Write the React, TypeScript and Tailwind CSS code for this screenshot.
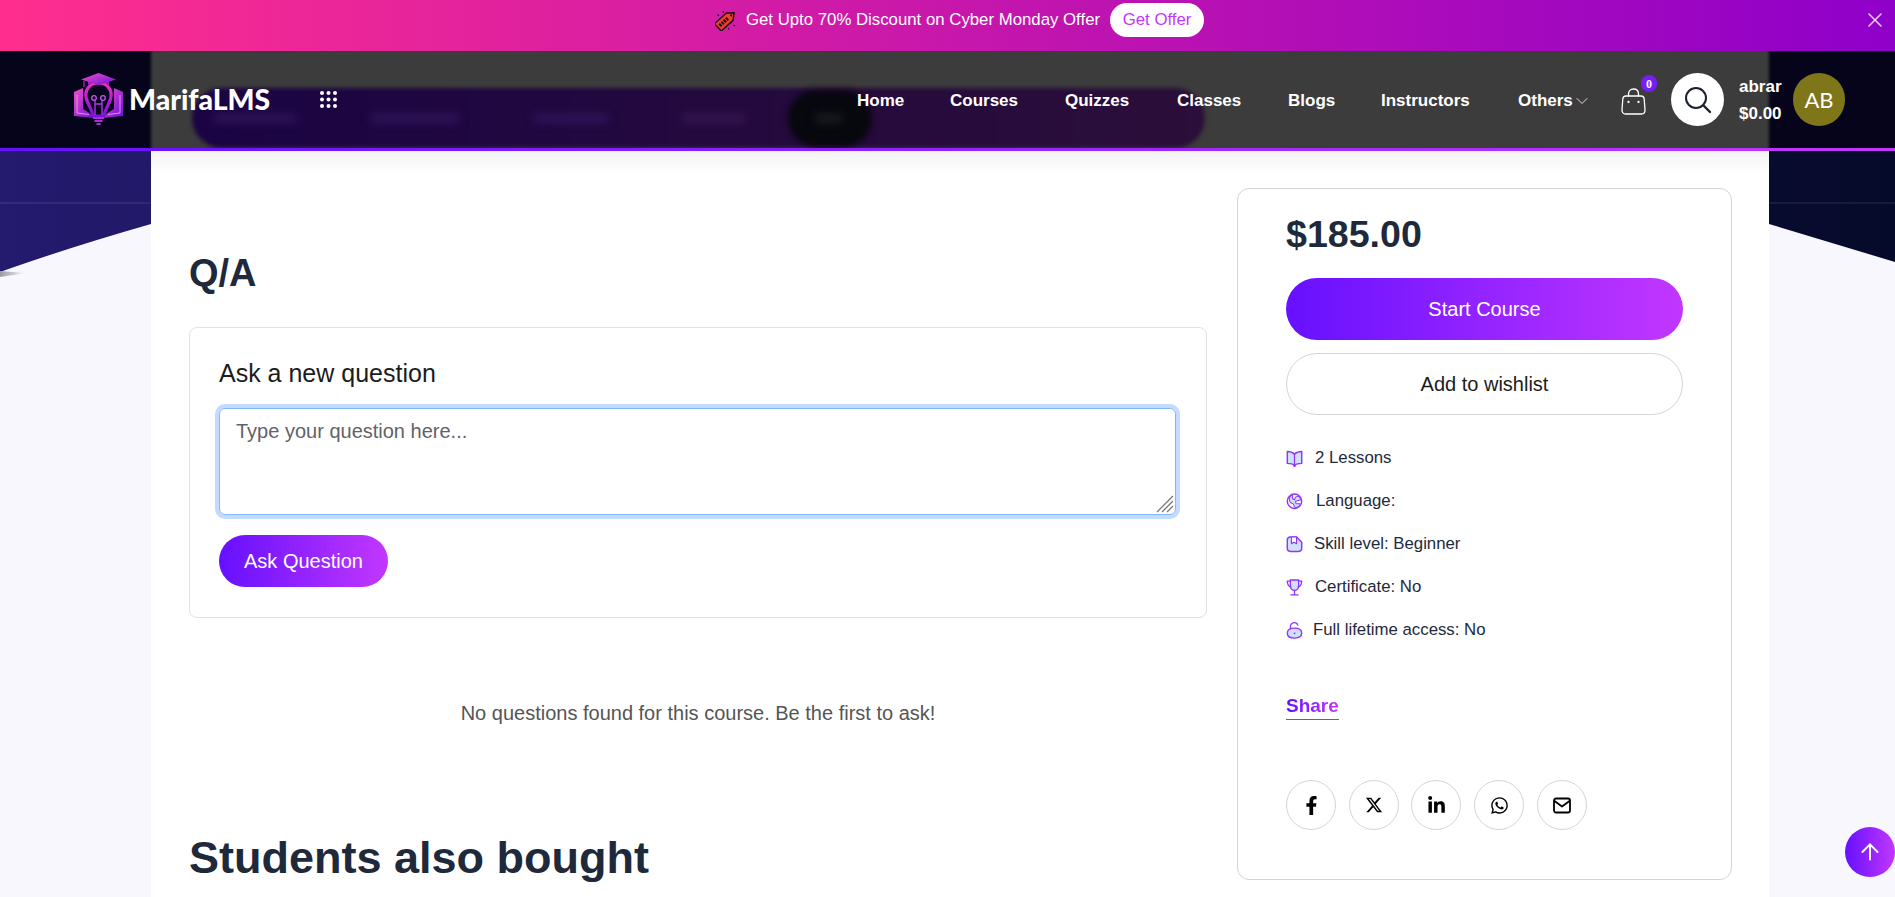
import React from "react";
import { X, ChevronDown, ArrowUp } from "lucide-react";
import { FaFacebookF, FaLinkedinIn, FaWhatsapp } from "react-icons/fa";
import { FaXTwitter } from "react-icons/fa6";

const grad = "bg-[linear-gradient(90deg,#6610ff_0%,#c237ff_100%)]";

function Logo() {
  return (
    <svg width="51" height="53" viewBox="0 0 51 53" className="shrink-0">
      <defs>
        <linearGradient id="lg" x1="0" y1="0" x2="0" y2="1">
          <stop offset="0" stopColor="#f030c0" />
          <stop offset="1" stopColor="#7a10e0" />
        </linearGradient>
        <linearGradient id="lb" x1="0" y1="0" x2="1" y2="1">
          <stop offset="0" stopColor="#f050c8" />
          <stop offset="1" stopColor="#6a10d8" />
        </linearGradient>
      </defs>
      <path d="M1 19 L10 15 L10 36 C14 38 18 41 22 45 L1 43Z" fill="url(#lb)" />
      <path d="M50 19 L41 15 L41 36 C37 38 33 41 29 45 L50 43Z" fill="url(#lb)" />
      <path d="M4 22 V40 L16 41.5 M47 22 V40 L35 41.5" fill="none" stroke="#f3a8ee" strokeWidth=".8" />
      <path d="M25.5 10 C16 10 11 18 13.5 26 C15 32 19 36 20 43 L31 43 C32 36 36 32 37.5 26 C40 18 35 10 25.5 10Z" fill="#0a0420" stroke="url(#lg)" strokeWidth="3.2" />
      <path d="M22 42 V27 M29 42 V27 M22 31 H29" stroke="#a63be0" strokeWidth="1.4" fill="none" />
      <circle cx="21" cy="25" r="2.3" fill="none" stroke="#c05ae8" strokeWidth="1.3" />
      <circle cx="30" cy="25" r="2.3" fill="none" stroke="#c05ae8" strokeWidth="1.3" />
      <path d="M20 45 H31 M21.5 48 H29.5 M23.5 51 H27.5" stroke="#b32ad8" strokeWidth="2.2" />
      <path d="M15 8 H36 V12 C30 8.5 21 8.5 15 12Z" fill="#a41bc8" />
      <path d="M25.5 0 L43 6.5 L25.5 12 L8 6.5Z" fill="url(#lb)" />
      <path d="M11 8 V14" stroke="#d03ac0" strokeWidth="1" />
    </svg>
  );
}

function Tag() {
  return (
    <svg width="22" height="22" viewBox="0 0 22 22" className="shrink-0">
      <g transform="rotate(-42 11 11)">
        <path d="M0 6 H16 L22 11 L16 16 H0Z" fill="#ee4030" stroke="#1f0a1a" strokeWidth="1.5" strokeLinejoin="round" />
        <circle cx="18" cy="11" r="1.1" fill="#1f0a1a" />
        <path d="M2.5 11 H14" stroke="#1f0a1a" strokeWidth="3.6" strokeDasharray="2 1" />
      </g>
      <path d="M2.5 5.5 L4 7 M8 2 L8.5 3.5 M20 17 L18.5 16 M14 20.5 L13.5 19" stroke="#1f0a1a" strokeWidth="1.1" />
    </svg>
  );
}

function GridDots() {
  const dots = [];
  for (let y = 0; y < 3; y++) for (let x = 0; x < 3; x++) dots.push(<circle key={`${x}${y}`} cx={2 + x * 6.5} cy={2 + y * 6.5} r="2" fill="#fff" />);
  return <svg width="17" height="17" viewBox="0 0 17 17" className="shrink-0">{dots}</svg>;
}

function Bag() {
  return (
    <svg width="25" height="27" viewBox="0 0 25 27" fill="none" stroke="#fff" strokeWidth="1.3" strokeLinecap="round">
      <path d="M5 8 H20 C22 8 23 9 23.2 11 L24 22 C24 24.5 22.5 26 20.5 26 H4.5 C2.5 26 1 24.5 1 22 L1.8 11 C2 9 3 8 5 8Z" />
      <path d="M7.5 8 V6 C7.5 3 9.5 1 12.5 1 C15.5 1 17.5 3 17.5 6 V8" />
      <circle cx="7.5" cy="14" r=".5" fill="#fff" />
      <circle cx="17.5" cy="14" r=".5" fill="#fff" />
    </svg>
  );
}

function Search() {
  return (
    <svg width="28" height="28" viewBox="0 0 28 28" fill="none" stroke="#1b2030" strokeWidth="2" strokeLinecap="round">
      <circle cx="12" cy="12" r="10" />
      <path d="M20 20 L26 26" strokeWidth="2.4" />
    </svg>
  );
}

const stroke = "#9333ff";
const fill = "#cfe0fb";

const icons: Record<string, React.ReactNode> = {
  book: (
    <>
      <path d="M1 1.5 C4 1.5 6.5 2.5 8 4 C9.5 2.5 12 1.5 15 1.5 V13 C12 13 9.5 13.5 8 15 C6.5 13.5 4 13 1 13Z" fill={fill} stroke={stroke} strokeWidth="1.4" strokeLinejoin="round" />
      <path d="M8 4 V15 M6.8 15 L8 16 L9.2 15" fill="none" stroke={stroke} strokeWidth="1.2" />
    </>
  ),
  globe: (
    <>
      <circle cx="8" cy="8" r="7" fill="#fff" stroke={stroke} strokeWidth="1.4" />
      <path d="M6 1.5 C3 3 2.5 6 3.5 8.5 C4.5 10.5 6 9.5 7 11 C7.5 12.5 7.5 13.5 9 14.5 L13 12.5 L13.5 10.5 L9.5 10.5 L9 8 L14.5 6.5 L12 3 L9 4 L8 6.5 L6 5.5Z" fill={fill} stroke={stroke} strokeWidth="1" strokeLinejoin="round" />
    </>
  ),
  file: (
    <>
      <path d="M4 1 H10 L15 6 V12 C15 14 14 15 12 15 H4 C2 15 1 14 1 12 V4 C1 2 2 1 4 1Z" fill={fill} stroke={stroke} strokeWidth="1.4" />
      <path d="M5 1 V7.5 L7.5 6 L10 7.5 V1Z" fill="#fff" stroke={stroke} strokeWidth="1.1" strokeLinejoin="round" />
    </>
  ),
  trophy: (
    <>
      <path d="M4 1 H12 V7 C12 9.5 10 11 8 11 C6 11 4 9.5 4 7Z" fill={fill} stroke={stroke} strokeWidth="1.3" />
      <path d="M4 2 H1 C1 5 2 7 4.5 8 M12 2 H15 C15 5 14 7 11.5 8 M8 11 V15 M4.5 15.4 H11.5" fill="none" stroke={stroke} strokeWidth="1.3" strokeLinecap="round" />
    </>
  ),
  lock: (
    <>
      <path d="M8 6 C12 6 15 7.5 15 11 C15 14.5 12.5 15.6 8 15.6 C3.5 15.6 1 14.5 1 11 C1 7.5 4 6 8 6Z" fill={fill} stroke={stroke} strokeWidth="1.3" />
      <path d="M4 6.8 V4.2 C4 2 6 .7 7.8 .7 C9.5 .7 10.8 1.7 11.2 3" fill="none" stroke={stroke} strokeWidth="1.2" strokeLinecap="round" />
      <circle cx="8" cy="11" r=".9" fill={stroke} />
    </>
  ),
};

function Feature({ icon, text, gap }: { icon: string; text: string; gap: string }) {
  return (
    <div className={`flex h-[18px] items-center ${gap} text-[16.8px] text-[#1e293b]`}>
      <svg width="17" height="17" viewBox="0 0 16 16.5" className="shrink-0">{icons[icon]}</svg>
      <span>{text}</span>
    </div>
  );
}

function Mail() {
  return (
    <svg width="18" height="17" viewBox="0 0 18 17" fill="none" stroke="#000" strokeWidth="1.8" strokeLinejoin="round">
      <rect x="1" y="1.5" width="16" height="14" rx="2" />
      <path d="M1.5 4 L9 9.5 L16.5 4" />
    </svg>
  );
}

function NavLink({ label, w }: { label: string; w: string }) {
  return <a className={`${w} text-[17px] font-bold leading-none text-white`}>{label}</a>;
}

function SocialBtn({ children }: { children: React.ReactNode }) {
  return (
    <span className="flex h-[50px] w-[50px] items-center justify-center rounded-full border border-[#d4d4d4] text-black">{children}</span>
  );
}

function Blur({ className }: { className: string }) {
  return <div className={`absolute top-[63px] h-[9px] rounded blur-[4px] ${className}`} />;
}

export default function App() {
  return (
    <div className="relative h-[897px] w-[1895px] overflow-hidden bg-[#f7f7fd] font-['Liberation_Sans',Arial,sans-serif]">
      {/* hero backdrop */}
      <svg className="absolute left-0 top-0" width="1895" height="300" viewBox="0 0 1895 300">
        <defs>
          <linearGradient id="hero" x1="0" y1="0" x2="1" y2="0">
            <stop offset="0" stopColor="#241a6e" />
            <stop offset="1" stopColor="#060a2a" />
          </linearGradient>
          <linearGradient id="wedge" x1="0" y1="0" x2="1" y2="0">
            <stop offset="0" stopColor="#9a9aa4" />
            <stop offset="1" stopColor="#f7f7fd" />
          </linearGradient>
        </defs>
        <path d="M0 0 H1895 V262 L1769 224 L151 224 C95 240 45 256 0 272Z" fill="url(#hero)" />
        <path d="M0 271 L26 273 L0 277Z" fill="url(#wedge)" />
        <path d="M0 203 H1895" stroke="#ffffff" strokeOpacity=".07" strokeWidth="2" />
      </svg>

      <div className="relative z-10 flex h-[51px] items-start justify-center bg-[linear-gradient(90deg,#ff2e8e_0%,#8f00c9_100%)] pt-[3px]">
        <div className="ml-[24px] flex h-[34px] items-center">
          <Tag />
          <span className="ml-[9px] text-[16.8px] text-white">Get Upto 70% Discount on Cyber Monday Offer</span>
          <span className="ml-[10px] flex h-[34px] w-[94px] items-center justify-center rounded-full bg-white text-[16.8px] text-[#c237ff]">Get Offer</span>
        </div>
        <X className="absolute right-[8px] top-[8px] text-[#f0d0f5]" size={24} strokeWidth={1.5} />
      </div>

      <header className="relative z-20">
        <div className="relative h-[97px] overflow-hidden bg-[#05041a]">
          <div className="absolute left-[151px] top-[-5px] h-[110px] w-[1618px] bg-[#3c3c3c] blur-[1.5px]" />
          <div className="absolute left-[192px] top-[37px] h-[60px] w-[1013px] rounded-full bg-[linear-gradient(90deg,#1b0444,#2b0e39)] blur-[2px]" />
          <div className="absolute left-[788px] top-[39px] h-[57px] w-[84px] rounded-full bg-[#07070e] blur-[3px]" />
          <Blur className="left-[214px] w-[83px] bg-[#2e1458]" />
          <Blur className="left-[370px] w-[90px] bg-[#2e1458]" />
          <Blur className="left-[533px] w-[76px] bg-[#2e1458]" />
          <Blur className="left-[682px] w-[64px] bg-[#34164f]" />
          <Blur className="left-[815px] w-[28px] bg-[#1a1a20]" />

          <nav className="relative flex h-[97px] items-center pl-[73px]">
            <div className="flex w-[195px] items-center">
              <Logo />
              <span className="ml-[5px] font-['Lato',sans-serif] text-[28.4px] font-black leading-none text-white">MarifaLMS</span>
            </div>
            <div className="ml-[52px]"><GridDots /></div>
            <div className="ml-[520px] mt-[2px] flex items-center">
              <NavLink label="Home" w="w-[93px]" />
              <NavLink label="Courses" w="w-[115px]" />
              <NavLink label="Quizzes" w="w-[112px]" />
              <NavLink label="Classes" w="w-[111px]" />
              <NavLink label="Blogs" w="w-[93px]" />
              <NavLink label="Instructors" w="w-[137px]" />
              <span className="flex w-[103px] items-center">
                <NavLink label="Others" w="" />
                <ChevronDown className="-ml-[1px] text-white" size={20} strokeWidth={1} />
              </span>
            </div>
            <div className="relative mt-[4px]">
              <Bag />
              <span className="absolute left-[20px] top-[-13px] flex h-[17px] w-[16px] items-center justify-center rounded-full bg-[#7a1cf5] font-['Liberation_Serif',serif] text-[12px] font-bold text-white">0</span>
            </div>
            <span className="ml-[25px] flex h-[53px] w-[53px] items-center justify-center rounded-full bg-white"><Search /></span>
            <div className="ml-[15px] flex w-[54px] flex-col gap-[8px] text-[17px] font-bold leading-[19px] text-white">
              <span>abrar</span>
              <span>$0.00</span>
            </div>
            <span className="flex h-[53px] w-[52px] items-center justify-center rounded-full bg-[#7f7519] font-['Lato',sans-serif] text-[22px] text-white">AB</span>
          </nav>
        </div>
        <div className={`h-[3px] ${grad}`} />
      </header>

      <main className="relative ml-[151px] h-[746px] w-[1618px] bg-white pl-[38px] pr-[37px]">
        <div className="absolute left-0 right-0 top-0 h-[22px] bg-[linear-gradient(180deg,#f3f3f3,#ffffff)]" />
        <div className="relative flex items-start gap-[30px]">
          <section className="w-[1018px]">
            <h2 className="mt-[101px] text-[38px] font-bold leading-[42px] text-[#1e293b]">Q/A</h2>
            <div className="mt-[33px] h-[291px] rounded-[8px] border border-[#e2e2e2] px-[29px] pt-[31px]">
              <h3 className="text-[25px] leading-[28px] text-[#1c1c1c]">Ask a new question</h3>
              <div className="relative mt-[21px] h-[107px] w-[957px]">
                <textarea
                  placeholder="Type your question here..."
                  className="block h-full w-full resize-none rounded-[6px] border border-[#86b7fe] px-[16px] py-[7px] text-[20px] leading-[30px] text-[#555] shadow-[0_0_0_4px_#c2dbfe] outline-none placeholder:text-[#5f6368]"
                />
                <svg className="absolute bottom-[2px] right-[2px]" width="18" height="18" viewBox="0 0 18 18" stroke="#777" strokeWidth="1.3">
                  <path d="M1 17 L17 1 M6 17 L17 6 M11 17 L17 11" />
                </svg>
              </div>
              <button className={`mt-[20px] block h-[52px] w-[169px] rounded-full text-[20px] text-white ${grad}`}>Ask Question</button>
            </div>
            <p className="mt-[83px] text-center text-[20px] leading-[24px] text-[#555]">No questions found for this course. Be the first to ask!</p>
            <h2 className="mt-[107px] text-[45px] font-bold leading-[52px] text-[#1e293b]">Students also bought</h2>
          </section>

          <aside className="mt-[37px] h-[692px] w-[495px] rounded-[12px] border border-[#d4d4d4] px-[48px] pt-[24px]">
            <div className="text-[37.6px] font-bold leading-[42px] text-[#1e293b]">$185.00</div>
            <button className={`mt-[23px] block h-[62px] w-[397px] rounded-full text-[20px] text-white ${grad}`}>Start Course</button>
            <button className="mt-[13px] block h-[62px] w-[397px] rounded-full border border-[#d4d4d4] text-[20px] text-[#1c1c1c]">Add to wishlist</button>
            <div className="mt-[34px] flex flex-col gap-[25px]">
              <Feature icon="book" text="2 Lessons" gap="gap-[12px]" />
              <Feature icon="globe" text="Language:" gap="gap-[13px]" />
              <Feature icon="file" text="Skill level: Beginner" gap="gap-[11px]" />
              <Feature icon="trophy" text="Certificate: No" gap="gap-[12px]" />
              <Feature icon="lock" text="Full lifetime access: No" gap="gap-[10px]" />
            </div>
            <div className="mt-[56px] inline-block border-b border-b-[#9333ff] pb-[2px]">
              <span className={`block bg-clip-text text-[19px] font-bold leading-[22px] text-transparent ${grad}`}>Share</span>
            </div>
            <div className="mt-[60px] flex gap-[12.7px]">
              <SocialBtn><FaFacebookF size={19} /></SocialBtn>
              <SocialBtn><FaXTwitter size={18} /></SocialBtn>
              <SocialBtn><FaLinkedinIn size={19} /></SocialBtn>
              <SocialBtn><FaWhatsapp size={19} /></SocialBtn>
              <SocialBtn><Mail /></SocialBtn>
            </div>
          </aside>
        </div>
      </main>

      <button className={`absolute bottom-[20px] right-0 z-30 flex h-[50px] w-[50px] items-center justify-center rounded-full ${grad}`}>
        <ArrowUp className="text-white" size={26} strokeWidth={1.8} />
      </button>
    </div>
  );
}
